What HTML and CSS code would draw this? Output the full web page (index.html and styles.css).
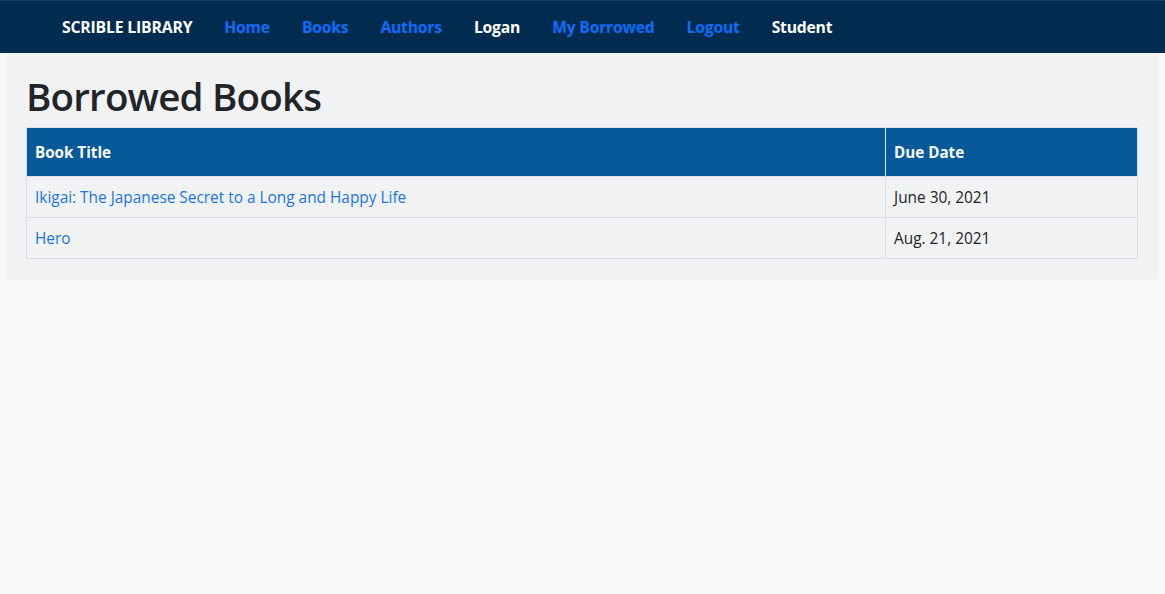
FILE: index.html
```html
<!DOCTYPE html>
<html lang="en">
<head>
<meta charset="utf-8">
<title>Borrowed Books</title>
<link rel="stylesheet" href="styles.css">
</head>
<body>
<nav class="navbar">
  <a class="brand" href="#">SCRIBLE LIBRARY</a>
  <a class="nav-link" href="#">Home</a>
  <a class="nav-link" href="#">Books</a>
  <a class="nav-link" href="#">Authors</a>
  <span class="nav-text">Logan</span>
  <a class="nav-link" href="#">My Borrowed</a>
  <a class="nav-link" href="#">Logout</a>
  <span class="nav-text">Student</span>
</nav>
<main class="content">
  <h1 class="title">Borrowed Books</h1>
  <table class="books">
    <thead>
      <tr><th class="col-title">Book Title</th><th class="col-date">Due Date</th></tr>
    </thead>
    <tbody>
      <tr><td><a href="#">Ikigai: The Japanese Secret to a Long and Happy Life</a></td><td>June 30, 2021</td></tr>
      <tr><td><a href="#">Hero</a></td><td>Aug. 21, 2021</td></tr>
    </tbody>
  </table>
</main>
</body>
</html>
```

FILE: styles.css
```css
* { box-sizing: border-box; }
html, body { margin: 0; padding: 0; }
body {
  background: #f7f8fa;
  font-family: "Open Sans", "Noto Sans", "Liberation Sans", sans-serif;
  font-size: 16px;
  color: #212529;
  line-height: 1.5;
}
.navbar {
  height: 53px;
  background: #012b4f;
  border-top: 1px solid #1d3f5f;
  display: flex;
  align-items: center;
  gap: 32px;
  padding-left: 62px;
  padding-top: 2px;
}
.navbar a, .navbar span { text-decoration: none; font-weight: 700; font-size: 15.7px; letter-spacing: -0.2px; }
.brand { color: #ffffff; }
.navbar .brand { font-size: 15.8px; }
.nav-link { color: #0d6efd; }
.nav-text { color: #ffffff; }
.content {
  margin: 0 6px;
  background: #f1f2f4;
  padding: 19px 21px 20px 20px;
}
.title {
  margin: 0 0 7px 0;
  font-size: 38.5px;
  font-weight: 600;
  line-height: 48px;
  letter-spacing: -0.8px;
}
.books {
  width: 100%;
  border-collapse: collapse;
  border: 1px solid #dcdde0;
  font-size: 15.4px;
}
.books th {
  background: #065a9a;
  color: #ffffff;
  text-align: left;
  font-weight: 700;
  font-size: 15.2px;
  height: 49px;
  padding: 1px 8px 0;
  border-left: 1px solid #dfe6ee;
}
.books th:first-child { border-left: none; }
.books td {
  height: 41px;
  padding: 1px 8px 0;
  border-top: 1px solid #dcdde0;
  border-left: 1px solid #dcdde0;
}
.books td:first-child { border-left: none; }
.col-title { width: 859px; }
.books a { color: #1b74e4; text-decoration: none; }
```
